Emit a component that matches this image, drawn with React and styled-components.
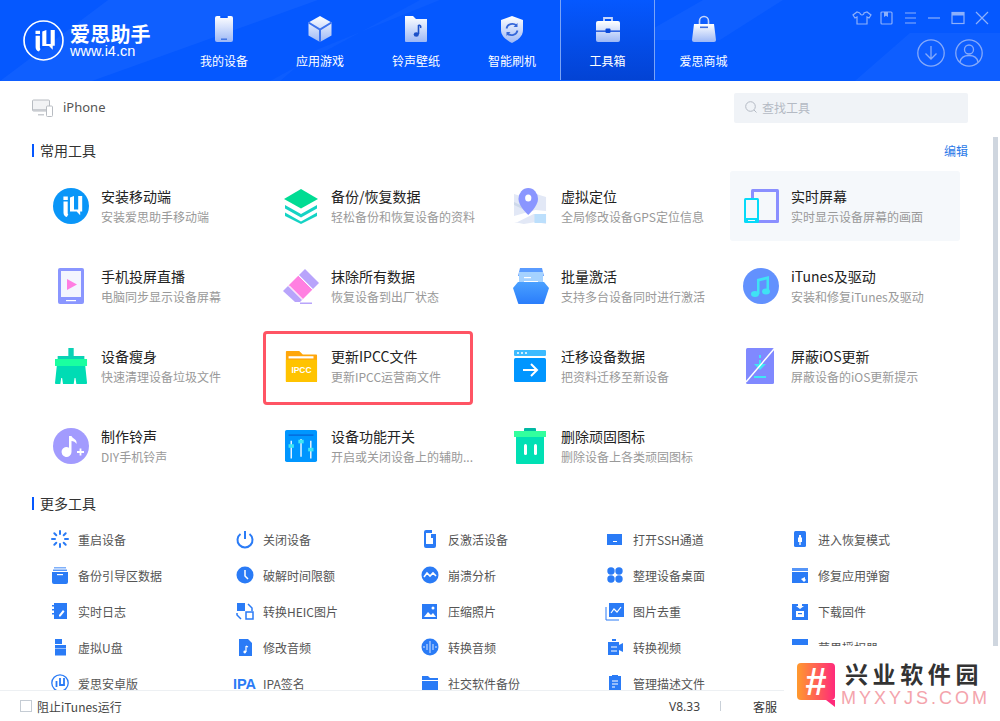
import React from 'react';
import styled, { createGlobalStyle } from 'styled-components';

const Global = createGlobalStyle`
  html, body { margin: 0; padding: 0; background: #fff; }
  body { font-family: "Noto Sans CJK SC", "Liberation Sans", sans-serif; overflow: hidden; }
  * { box-sizing: border-box; }
`;

const Page = styled.div`
  position: relative; width: 1000px; height: 721px; overflow: hidden;
  display: flex; flex-direction: column; background: #fff;
`;

/* ---------- header ---------- */
const Header = styled.header`
  height: 81px; flex: none; display: flex; position: relative; overflow: hidden; background: #0558ff;
`;
const Sheen = styled.svg`
  position: absolute; inset: 0; width: 1000px; height: 81px;
`;
const Logo = styled.div`
  width: 176px; flex: none; padding: 20px 0 0 23px; display: flex; gap: 6px; position: relative; color: #fff;
`;
const LogoText = styled.div`
  display: flex; flex-direction: column; margin-top: 4px;
`;
const LogoName = styled.span`
  font-size: 20px; line-height: 20px; font-weight: 700; letter-spacing: .2px; white-space: nowrap;
`;
const LogoUrl = styled.span`
  font: 14.5px/14px "Liberation Sans", sans-serif;
`;
const Nav = styled.nav`
  display: flex; position: relative;
`;
const NavItem = styled.div`
  width: ${p => p.$w || 96}px; height: 80px; display: flex; flex-direction: column; align-items: center;
  padding-top: 15px; color: #fff; font-size: 12px; line-height: 16px;
  ${p => p.$active && `
    background: linear-gradient(#0558ff, #0343d4);
    border-left: 1px solid #7aa4f7; border-right: 1px solid #7aa4f7;
  `}
`;
const NavIcon = styled.svg`
  width: 30px; height: 30px; margin-bottom: 8px;
`;
const WinArea = styled.div`
  position: absolute; right: 0; top: 0; width: 150px; height: 81px;
`;
const WinRow = styled.div`
  position: absolute; left: 0; top: 11px; display: flex; gap: 0;
`;
const WinBtn = styled.svg`
  width: 24px; height: 14px; display: block;
`;
const CircleRow = styled.div`
  position: absolute; left: 67px; top: 39px; display: flex; gap: 10px;
`;
const CircleIcon = styled.svg`
  width: 28px; height: 28px; display: block;
`;

/* ---------- content ---------- */
const Content = styled.main`
  flex: 1; min-height: 0; overflow: hidden; padding: 12px 0 0 0; position: relative;
`;
const DeviceBar = styled.div`
  display: flex; align-items: center; height: 30px; padding: 0 32px;
`;
const DeviceName = styled.span`
  font: 13px/18px "Noto Sans", "Liberation Sans", sans-serif; color: #555; margin: 0 0 2px 10px; flex: 1;
`;
const Search = styled.div`
  width: 234px; height: 30px; background: #f0f3f7; border-radius: 2px; display: flex; align-items: center;
  padding: 0 0 2px 11px; gap: 5px; color: #b4bac4; font-size: 12px;
`;
const SectionHead = styled.div`
  display: flex; align-items: center; justify-content: space-between; height: 14px; padding: 0 32px;
  margin-top: ${p => p.$top}px;
`;
const SectionTitle = styled.h2`
  margin: 0; border-left: 2px solid #0558ff; padding-left: 6px; font-size: 14px; line-height: 13px;
  font-weight: 400; color: #333;
`;
const EditLink = styled.a`
  color: #2a79e8; font-size: 12px;
`;
const ToolGrid = styled.div`
  display: grid; grid-template-columns: repeat(4, 230px); grid-auto-rows: 70px; row-gap: 10px;
  padding-left: 40px; margin-top: 14px;
`;
const Card = styled.div`
  display: flex; align-items: center; padding-left: 12.5px; gap: 12.5px; border-radius: 3px;
  background: ${p => (p.$hover ? '#f5f8fb' : 'transparent')};
`;
const CardIcon = styled.svg`
  width: 36px; height: 36px; flex: none;
`;
const CardText = styled.div`
  min-width: 0; display: flex; flex-direction: column; gap: 5px;
`;
const CardTitle = styled.div`
  font-size: 14px; line-height: 16px; color: #222; white-space: nowrap;
`;
const CardSub = styled.div`
  font-size: 12px; line-height: 16px; color: #999; white-space: nowrap; width: 146px; overflow: hidden;
`;
const Callout = styled.div`
  position: absolute; left: 263px; top: 250px; width: 210px; height: 74px;
  border: 3px solid #ff5464; border-radius: 4px; pointer-events: none;
`;
const MoreGrid = styled.div`
  display: grid; grid-template-columns: repeat(5, 185px); grid-auto-rows: 36px; padding-left: 49px; margin-top: 11px;
`;
const MoreItem = styled.div`
  display: flex; align-items: center; gap: 7px; font-size: 12px; color: #555; white-space: nowrap;
`;
const MoreIcon = styled.svg`
  width: 22px; height: 18px; flex: none; overflow: visible;
`;
const Scrollbar = styled.div`
  position: absolute; right: 2px; top: 56px; bottom: 0; width: 5px; background: #cfd6df;
`;

/* ---------- footer ---------- */
const Footer = styled.footer`
  height: 31px; flex: none; border-top: 1px solid #edf0f3; background: #fff; display: flex; align-items: center;
  padding-left: 20px; font-size: 12px; color: #444; position: relative;
`;
const Check = styled.span`
  width: 12px; height: 12px; border: 1px solid #c5ccd4; background: #fff; margin-right: 5px;
`;
const Spacer = styled.span`
  flex: 1;
`;
const Version = styled.span`
  font: 12px "Noto Sans", "Liberation Sans", sans-serif; color: #444; width: 51px;
`;
const Divider = styled.span`
  width: 1px; height: 10px; background: #c9d0d8; margin-right: 32px;
`;
const Service = styled.span`
  color: #333; margin-right: 223px;
`;

/* ---------- watermark ---------- */
const Watermark = styled.div`
  position: absolute; left: 784px; top: 646px; width: 216px; height: 75px; background: #fff;
`;
const WmBadge = styled.div`
  position: absolute; left: 13px; top: 17px; width: 38px; height: 37px; border-radius: 4px;
  background: linear-gradient(90deg, #ff9a2e, #ff2a7a); color: #fff; font: 700 38px/38px "Liberation Sans", sans-serif; text-align: center;
  &::after {
    content: ""; position: absolute; right: 0; bottom: -7px; border-top: 7px solid #ff2a7a; border-left: 9px solid transparent;
  }
`;
const WmTitle = styled.div`
  position: absolute; left: 61px; top: 12px; font-size: 23px; line-height: 30px; font-weight: 700; letter-spacing: 4.6px; color: #333; white-space: nowrap;
`;
const WmUrl = styled.div`
  position: absolute; left: 57px; top: 41px; font: 18px/22px "Liberation Sans", sans-serif; letter-spacing: 3px; color: #f4a4ac; white-space: nowrap;
`;

const grad = (id, a, b) => (
  <linearGradient id={id} x1="0" y1="0" x2="0" y2="1"><stop offset="0" stopColor={a} /><stop offset="1" stopColor={b} /></linearGradient>
);

const I4 = ({ fill = '#fff' }) => (
  <g>
    <path fill={fill} d="M10.5 13.5h4.2V25.2a1.5 1.5 0 0 0 .6 1.2l-1.5 2.6c-2-.6-3.3-2-3.3-4.3zM10.4 8.6h4.4v3.3h-4.4zM17 9.5l4-1.6v13.6h4.2V8h4v15.4h-2v3.8l-3.6-3.6H17z" />
  </g>
);

const navIcons = [
  <g key="a"><rect x="6" y="1" width="18" height="26" rx="2" fill="url(#nv)" /><rect x="11" y="1" width="8" height="2" rx="1" fill="#0558ff" /><rect x="12" y="23.5" width="6" height="1.4" fill="#3c6fe0" /></g>,
  <g key="b"><path d="M15 1l11.5 6.5v13L15 27 3.500 20.500v-13z" fill="url(#nv)" /><path d="M3.500 7.500L15 14.500l11.500-7M15 14.500V27" stroke="#3d74ee" strokeWidth="2" fill="none" /></g>,
  <g key="c"><path d="M4 1h8l3 3h11v22a1 1 0 0 1-1 1H5a1 1 0 0 1-1-1z" fill="url(#nv)" /><path d="M17.500 10v9" stroke="#1c50c8" strokeWidth="1.600" /><ellipse cx="15.300" cy="19.500" rx="2.600" ry="2.200" fill="#1c50c8" /><path d="M17.500 10q3 .5 2 3" stroke="#1c50c8" strokeWidth="1.600" fill="none" /></g>,
  <g key="d"><path d="M15 1l11 4v10c0 6-5 10-11 13C9 25 4 21 4 15V5z" fill="url(#nv)" /><path d="M9.500 13.500a6 6 0 0 1 10-3M20.500 15.500a6 6 0 0 1-10 3" stroke="#3567d9" strokeWidth="1.800" fill="none" /><path d="M20.500 8v4h-4M9.500 21v-4h4" fill="#3567d9" /></g>,
  <g key="e"><path d="M11 7V3h8v4" stroke="#c7d6fa" strokeWidth="1.800" fill="none" /><rect x="3" y="6" width="24" height="21" rx="2" fill="url(#nv)" /><rect x="3" y="15.500" width="24" height="1.300" fill="#0a48dc" /><rect x="12.500" y="13.500" width="5" height="4.500" rx="1" fill="#0a48dc" /></g>,
  <g key="f"><path d="M10.500 9V6a4.500 4.500 0 0 1 9 0v3" stroke="#c7d6fa" strokeWidth="1.600" fill="none" /><path d="M5 9h20l2 16a2 2 0 0 1-2 2H5a2 2 0 0 1-2-2z" fill="url(#nv)" /><rect x="11" y="11.500" width="8" height="1.600" fill="#3c6fe0" /></g>,
];

const nav = [['我的设备'], ['应用游戏'], ['铃声壁纸'], ['智能刷机'], ['工具箱', 1], ['爱思商城']];

const winIcons = [
  <path key="a" d="M8 2L5 1 1 4l2 3 2-1v7h10V6l2 1 2-3-4-3-3 1a2 2 0 0 1-4 0" transform="translate(2 0)" />,
  <g key="b"><rect x="7" y="1" width="11" height="12" rx="1" /><path d="M10 1v5l2-1.300L14 6V1" fill="#8db0fb" stroke="none" /></g>,
  <path key="c" d="M7 2h11M7 7h11M7 12h11" />,
  <path key="d" d="M6 7h12" />,
  <g key="e"><rect x="6" y="1.500" width="12" height="11" /><path d="M6 3h12" strokeWidth="3" /></g>,
  <path key="f" d="M6 1l12 12M18 1L6 13" />,
];

const Ic = {
  i4: <g><circle cx="18" cy="18" r="18" fill="#0a96f8" /><I4 /></g>,
  layers: <g><path d="M18 1l17 10-17 9.500L1 11z" fill="#00dc93" /><path d="M2 17l16 9 16-9v3.500L18 29.500 2 20.500z" fill="#14d3c4" /><path d="M2 24.500l16 9 16-9V28L18 36 2 28z" fill="#14d3c4" /></g>,
  map: <g transform="translate(1 0) scale(.89 1)"><path d="M0 6l11 3 14-3 11 3v27l-11-2-14 2-11-2z" fill="#e2e8f6" /><path d="M0 28l24-6 12 1v3H22L4 34H0z" fill="#fff" /><path d="M23 26h13v9H23z" fill="#bcdffc" /><path d="M0 14l14 6-2 2L0 17z" fill="#cdd8ea" /><path d="M16 0a11 11 0 0 1 11 11c0 7-11 16-11 16S5 18 5 11A11 11 0 0 1 16 0z" fill="#8a96ff" /><circle cx="16" cy="10" r="3.500" fill="#fff" /></g>,
  screen: <g><rect x="8" y="1" width="28" height="34" rx="1.500" fill="#8a8fff" /><rect x="11" y="4" width="22" height="28" fill="#f5f8fb" /><rect x="1" y="10" width="15" height="25" rx="1.500" fill="#06daf8" /><rect x="3" y="12" width="11" height="18" fill="#f5f8fb" /><rect x="5" y="32" width="7" height="1" fill="#f5f8fb" /></g>,
  cast: <g><rect x="5" y="0" width="26" height="36" rx="2" fill="#8a96ff" /><rect x="8" y="3" width="20" height="26" fill="#f3f5fe" /><path d="M14 11l10 5.500-10 5.500z" fill="#ff7de2" /><rect x="13" y="32" width="10" height="1.200" fill="#fff" /></g>,
  eraser: <g><path d="M22 1l14 14-6 6-14-14z" fill="#b8a4fb" /><path d="M15.500 7.500l14 14-10 10-14-14z" fill="#ff80e1" /><path d="M5 18l14 14-2 2h-5L0 23z" fill="#b8a4fb" /><path d="M15.500 7.500l14 14M6 17.500l13.500 13.500" stroke="#fff" strokeWidth="1" /><rect x="17" y="34.500" width="12" height="1.500" fill="#b8a4fb" /></g>,
  box: <g><path d="M7 0h22l2 8H5z" fill="#5a9bff" /><path d="M6 4h24v13H6z" fill="#a5d2ff" /><rect x="11" y="9" width="7" height="1.200" fill="#fff" /><rect x="11" y="13" width="14" height="1.200" fill="#fff" /><path d="M5 14h26l5 6-5 15a1 1 0 0 1-1 1H6a1 1 0 0 1-1-1L0 20z" fill="url(#bx)" /></g>,
  music: <g><circle cx="18" cy="18" r="18" fill="#6291fe" /><path d="M14 11l12-3v15h-2.500V11.500l-7 1.800V26H14z" fill="#3fe2f4" /><ellipse cx="12" cy="26" rx="4" ry="3" fill="#3fe2f4" /><ellipse cx="23" cy="23.500" rx="4" ry="3" fill="#3fe2f4" /></g>,
  broom: <g transform="translate(2 0) scale(.89 1)"><rect x="15" y="0" width="6" height="10" fill="#0ad2b5" /><rect x="3" y="8" width="30" height="4" fill="#0ad2b5" /><rect x="0" y="11" width="36" height="7" fill="#1affa0" /><path d="M2 18h32l2 17a1 1 0 0 1-1 1H24l-1-6h-1l-1 6H9l-1-6H7l-1 6H1a1 1 0 0 1-1-1z" fill="#00dcb4" /></g>,
  folder: <g transform="translate(2 2) scale(.89)"><path d="M1 2a1 1 0 0 1 1-1h14l4 4h15a1 1 0 0 1 1 1v29a1 1 0 0 1-1 1H2a1 1 0 0 1-1-1z" fill="#ffa60a" /><rect x="4" y="7" width="28" height="2.500" fill="#fff" /><path d="M1 11h35v24a1 1 0 0 1-1 1H2a1 1 0 0 1-1-1z" fill="#ffc300" /><text x="18.500" y="26" textAnchor="middle" fontSize="9.500" fontWeight="700" fill="#fff" fontFamily="Liberation Sans, sans-serif">IPCC</text></g>,
  migrate: <g transform="translate(1 1)"><rect x="0" y="1" width="32" height="6" rx="1" fill="#3dbbff" /><circle cx="4" cy="4" r="1" fill="#fff" /><circle cx="8" cy="4" r="1" fill="#fff" /><circle cx="12" cy="4" r="1" fill="#fff" /><rect x="0" y="9" width="32" height="24" rx="1.500" fill="#0096ff" /><path d="M9 21h14M17 15l6 6-6 6" stroke="#fff" strokeWidth="2" fill="none" /></g>,
  block: <g transform="translate(3 0)"><rect x="0" y="0" width="28" height="36" rx="1.500" fill="#8089ff" /><path d="M14 7v3M14 12v7" stroke="#3fe7f4" strokeWidth="2" /><path d="M8 16l6 6 6-6z" fill="#3fe7f4" /><rect x="8" y="28" width="12" height="2" fill="#3fe7f4" /><path d="M0 34L28 1" stroke="#fff" strokeWidth="1.500" /></g>,
  note: <g><circle cx="18" cy="18" r="18" fill="#a29bfe" /><path d="M16 8h2.500c1 3 6 3 5 8-1-2-3-3-5-3v11a5 5 0 1 1-2.500-4.300z" fill="#fff" /><path d="M24 24h7M27.500 20.500v7" stroke="#fff" strokeWidth="1.800" /></g>,
  switches: <g transform="translate(2 2) scale(.89)"><rect x="0" y="0" width="36" height="36" rx="2" fill="#0096ff" /><rect x="4" y="5" width="28" height="1.500" fill="#0666d8" /><path d="M7 12v20M18 10v20M29 12v20" stroke="#fff" strokeWidth="1.500" /><rect x="4" y="16" width="6" height="4" fill="#3fe7f4" /><rect x="15" y="11" width="6" height="4" fill="#3fe7f4" /><rect x="26" y="20" width="6" height="4" fill="#3fe7f4" /></g>,
  trash: <g transform="translate(1 0)"><rect x="10" y="0" width="12" height="4" rx="1" fill="#00b9a3" /><rect x="0" y="3" width="32" height="6" fill="#33ff9e" /><path d="M2 9h28v26a1 1 0 0 1-1 1H3a1 1 0 0 1-1-1z" fill="#00e0b4" /><rect x="10" y="16" width="3" height="11" rx="1.500" fill="#fff" /><rect x="20" y="16" width="3" height="11" rx="1.500" fill="#fff" /></g>,
};

const tools = [
  ['i4', '安装移动端', '安装爱思助手移动端'],
  ['layers', '备份/恢复数据', '轻松备份和恢复设备的资料'],
  ['map', '虚拟定位', '全局修改设备GPS定位信息'],
  ['screen', '实时屏幕', '实时显示设备屏幕的画面', 1],
  ['cast', '手机投屏直播', '电脑同步显示设备屏幕'],
  ['eraser', '抹除所有数据', '恢复设备到出厂状态'],
  ['box', '批量激活', '支持多台设备同时进行激活'],
  ['music', 'iTunes及驱动', '安装和修复iTunes及驱动'],
  ['broom', '设备瘦身', '快速清理设备垃圾文件'],
  ['folder', '更新IPCC文件', '更新IPCC运营商文件'],
  ['migrate', '迁移设备数据', '把资料迁移至新设备'],
  ['block', '屏蔽iOS更新', '屏蔽设备的iOS更新提示'],
  ['note', '制作铃声', 'DIY手机铃声'],
  ['switches', '设备功能开关', '开启或关闭设备上的辅助...'],
  ['trash', '删除顽固图标', '删除设备上各类顽固图标'],
];

const B = '#2a7bf6';
const more = [
  ['重启设备', <g stroke={B} strokeWidth="2" strokeLinecap="round"><path d="M11 1v3M11 14v3M3 9h3M16 9h3M5.300 3.300l2 2M14.700 12.700l2 2M16.700 3.300l-2 2M7.300 12.700l-2 2" /></g>],
  ['关闭设备', <g stroke={B} strokeWidth="2" fill="none"><path d="M11 1v8" /><path d="M6.500 4a7.500 7.500 0 1 0 9 0" /></g>],
  ['反激活设备', <g fill={B}><path d="M5 2a2 2 0 0 1 2-2h6v4h4v12a2 2 0 0 1-2 2H7a2 2 0 0 1-2-2z" /><rect x="7" y="3" width="7" height="11" fill="#fff" /><rect x="12" y="4" width="3" height="4" /></g>],
  ['打开SSH通道', <g fill={B}><rect x="3" y="4" width="15" height="11" /><rect x="9" y="11" width="4" height="1" fill="#fff" /></g>],
  ['进入恢复模式', <g fill={B}><rect x="5" y="1" width="12" height="16" rx="1.500" /><path d="M10 5h2v2l1 1v4h-4V8l1-1z" fill="#fff" /><rect x="10.300" y="12" width="1.400" height="3" fill="#fff" /></g>],
  ['备份引导区数据', <g fill={B}><rect x="5" y="1" width="12" height="1.500" opacity=".6" /><rect x="4" y="3.500" width="14" height="1.500" opacity=".8" /><path d="M3 6h16v10a2 2 0 0 1-2 2H5a2 2 0 0 1-2-2z" /><rect x="8" y="8" width="6" height="1.200" fill="#fff" /></g>],
  ['破解时间限额', <g><circle cx="11" cy="9" r="8.500" fill={B} /><path d="M11 4v6l3 3" stroke="#fff" strokeWidth="1.500" fill="none" /></g>],
  ['崩溃分析', <g><circle cx="11" cy="9" r="8.500" fill={B} /><path d="M5 11l3-4 3 3 3-3 3 3" stroke="#fff" strokeWidth="1.600" fill="none" /></g>],
  ['整理设备桌面', <g fill={B}><circle cx="7" cy="5" r="3.700" /><circle cx="15" cy="5" r="3.700" /><circle cx="7" cy="13" r="3.700" /><circle cx="15" cy="13" r="3.700" /></g>],
  ['修复应用弹窗', <g fill={B}><rect x="3" y="2" width="16" height="3" opacity=".8" /><path d="M3 6h16v11H3z" /><path d="M12 13l4-2v2l1 1-2 2-1-1z" fill="#fff" /></g>],
  ['实时日志', <g fill={B}><path d="M5 1h13v16H5z" /><rect x="3" y="3" width="3" height="1.500" /><rect x="3" y="7" width="3" height="1.500" /><rect x="3" y="11" width="3" height="1.500" /><path d="M10 13l4-5 1.500 1.500-4 5h-1.500z" fill="#fff" /></g>],
  ['转换HEIC图片', <g><rect x="3" y="1" width="8" height="8" fill={B} /><rect x="12" y="10" width="7" height="7" fill="none" stroke={B} strokeWidth="1.500" /><path d="M14 2l4 4v3M3 11v2l4 4" stroke={B} strokeWidth="1.500" fill="none" /></g>],
  ['压缩照片', <g><rect x="3" y="2" width="15" height="15" fill={B} /><path d="M5 15l4-5 3 3 2-2 3 4z" fill="#fff" /><circle cx="14" cy="6" r="1.500" fill="#fff" /></g>],
  ['图片去重', <g><path d="M2 5v13h13" stroke={B} strokeWidth="1" fill="none" /><rect x="5" y="1" width="15" height="14" fill={B} /><path d="M7 11l3-4 3 3 4-5" stroke="#fff" strokeWidth="1.200" fill="none" /></g>],
  ['下载固件', <g fill={B}><path d="M3 2h16v16H3z" /><path d="M9 1h4v3h2l-4 3-4-3h2z" fill="#fff" /><rect x="7" y="9" width="8" height="6" fill="#fff" /><rect x="9" y="11" width="4" height="1.200" fill={B} /></g>],
  ['虚拟U盘', <g fill={B}><path d="M6 1h7v5H6z" /><rect x="6" y="7" width="11" height="3" /><rect x="6" y="10.500" width="11" height="7" /></g>],
  ['修改音频', <g fill={B}><path d="M5 1h9l4 4v13H5z" /><path d="M12 8v6M12 8l2 1" stroke="#fff" strokeWidth="1.200" fill="none" /><circle cx="10.800" cy="14" r="1.400" fill="#fff" /></g>],
  ['转换音频', <g><circle cx="11" cy="9" r="8.500" fill={B} /><path d="M5 8v2M8 6v6M11 3v12M14 6v6M17 8v2" stroke="#bcd6ff" strokeWidth="1.200" /></g>],
  ['转换视频', <g fill={B}><path d="M8 1h4v2H8z" /><path d="M4 4h11v13H4z" /><path d="M15 7l4-2v9l-4-2z" /><path d="M7 9h6M7 13h6" stroke="#fff" strokeWidth="1.200" /></g>],
  ['苹果授权器', <g fill={B}><rect x="3" y="1" width="16" height="6" /><rect x="3" y="9" width="16" height="8" /></g>],
  ['爱思安卓版', <g fill="none" stroke={B} strokeWidth="1.300"><circle cx="11" cy="9" r="8.200" /><path d="M7.500 7v6M11 4v7h4V4" strokeWidth="1.800" /></g>],
  ['IPA签名', <text x="-1" y="15" fontSize="14.500" fontWeight="700" fill={B} fontFamily="Liberation Sans, sans-serif">IPA</text>],
  ['社交软件备份', <g fill={B}><path d="M3 2h6l2 2h8v13H3z" /><rect x="3" y="6" width="16" height="1" fill="#fff" /></g>],
  ['管理描述文件', <g fill={B}><path d="M5 2h12v16H5z" /><rect x="8" y="1" width="6" height="2.500" /><path d="M8 7h6M8 10h6M8 13h3" stroke="#fff" strokeWidth="1.200" /></g>],
];

export default function App() {
  return (
    <Page>
      <Global />
      <Header>
        <Sheen viewBox="0 0 1000 81">
          <path d="M0 81L108 0h210L92 81z" fill="#fff" opacity=".045" />
          <path d="M280 81L316 50 440 0h-20L270 81z" fill="#fff" opacity=".03" />
          <path d="M720 40L783 0h-80l-70 40z" fill="#fff" opacity=".04" />
          <path d="M855 81l55-48h90v48z" fill="#fff" opacity=".04" />
        </Sheen>
        <Logo>
          <svg width="41" height="41" viewBox="0 0 40 40">
            <circle cx="20" cy="20" r="19" fill="none" stroke="#fff" strokeWidth="1.600" />
            <g transform="translate(1.800 1.800)"><I4 /></g>
          </svg>
          <LogoText>
            <LogoName>爱思助手</LogoName>
            <LogoUrl>www.i4.cn</LogoUrl>
          </LogoText>
        </Logo>
        <Nav>
          {nav.map(([t, a], i) => (
            <NavItem key={t} $active={a} $w={a ? 95 : i === 5 ? 97 : 96}>
              <NavIcon viewBox="0 0 30 30">
                <defs>{grad('nv', '#ffffff', '#9db8f6')}</defs>
                {navIcons[i]}
              </NavIcon>
              {t}
            </NavItem>
          ))}
        </Nav>
        <WinArea>
          <WinRow>
            {winIcons.map((c, i) => (
              <WinBtn key={i} viewBox="0 0 24 14" fill="none" stroke="#8db0fb" strokeWidth="1.200">{c}</WinBtn>
            ))}
          </WinRow>
          <CircleRow>
            <CircleIcon viewBox="0 0 28 28" fill="none" stroke="#86aafa" strokeWidth="1.300">
              <circle cx="14" cy="14" r="13.200" /><path d="M14 7v13M8.500 14.500L14 20l5.500-5.500" />
            </CircleIcon>
            <CircleIcon viewBox="0 0 28 28" fill="none" stroke="#86aafa" strokeWidth="1.300">
              <circle cx="14" cy="14" r="13.200" /><circle cx="14" cy="10.500" r="4.500" /><path d="M5 23c1-5 5-6.500 9-6.500s8 1.500 9 6.500" />
            </CircleIcon>
          </CircleRow>
        </WinArea>
      </Header>

      <Content>
        <DeviceBar>
          <svg width="21" height="18" viewBox="0 0 21 18">
            <rect x="0.500" y="1" width="17" height="11" rx="1" fill="#f2f3f5" stroke="#b8bcc2" />
            <rect x="1" y="10" width="16" height="2" fill="#c9ccd1" />
            <path d="M6 15h6v1.500H6z" fill="#c9ccd1" />
            <rect x="14.500" y="7" width="6" height="10.500" rx="1" fill="#fff" stroke="#b8bcc2" />
          </svg>
          <DeviceName>iPhone</DeviceName>
          <Search>
            <svg width="12" height="12" viewBox="0 0 12 12" fill="none" stroke="#b4bac4" strokeWidth="1">
              <circle cx="5.500" cy="5.500" r="4.800" /><path d="M9 9l2.500 2.500" />
            </svg>
            查找工具
          </Search>
        </DeviceBar>
        <SectionHead $top={20}>
          <SectionTitle>常用工具</SectionTitle>
          <EditLink>编辑</EditLink>
        </SectionHead>
        <svg width="0" height="0" style={{ position: 'absolute' }}><defs>{grad('bx', '#4aa0ff', '#2a7dfb')}</defs></svg>
        <ToolGrid>
          {tools.map(([ic, t, s, h]) => (
            <Card key={t} $hover={h}>
              <CardIcon viewBox="0 0 36 36">
                {Ic[ic]}
              </CardIcon>
              <CardText>
                <CardTitle>{t}</CardTitle>
                <CardSub>{s}</CardSub>
              </CardText>
            </Card>
          ))}
        </ToolGrid>
        <Callout />
        <SectionHead $top={15}>
          <SectionTitle>更多工具</SectionTitle>
        </SectionHead>
        <MoreGrid>
          {more.map(([t, ic], i) => (
            <MoreItem key={i}>
              <MoreIcon viewBox="0 0 22 18">{ic}</MoreIcon>
              {t}
            </MoreItem>
          ))}
        </MoreGrid>
        <Scrollbar />
      </Content>

      <Footer>
        <Check />
        阻止iTunes运行
        <Spacer />
        <Version>V8.33</Version>
        <Divider />
        <Service>客服</Service>
      </Footer>

      <Watermark>
        <WmBadge>#</WmBadge>
        <WmTitle>兴业软件园</WmTitle>
        <WmUrl>MYXYJS.COM</WmUrl>
      </Watermark>
    </Page>
  );
}
